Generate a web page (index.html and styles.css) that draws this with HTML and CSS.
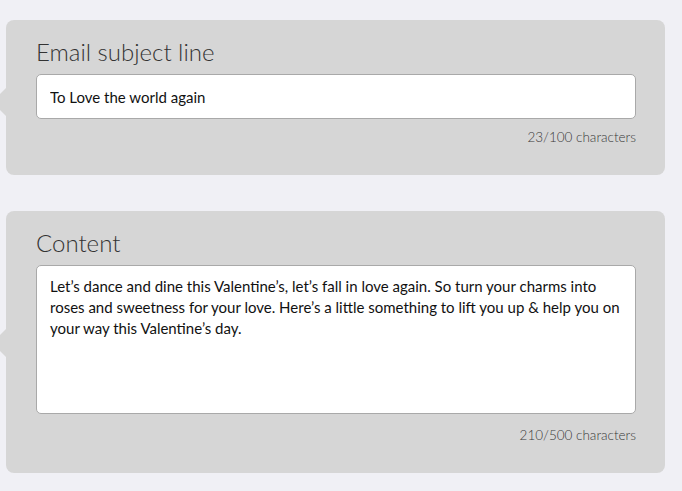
FILE: index.html
```html
<!DOCTYPE html>
<html>
<head>
<meta charset="utf-8">
<link rel="stylesheet" href="styles.css">
</head>
<body>
<div class="page">
  <section class="panel panel-subject">
    <h2 class="panel-title">Email subject line</h2>
    <input class="field" type="text" value="To Love the world again">
    <div class="count count-subject">23/100 characters</div>
  </section>
  <section class="panel panel-content">
    <h2 class="panel-title">Content</h2>
    <textarea class="field area">Let’s dance and dine this Valentine’s, let’s fall in love again. So turn your charms into roses and sweetness for your love. Here’s a little something to lift you up &amp; help you on your way this Valentine’s day.</textarea>
    <div class="count count-content">210/500 characters</div>
  </section>
</div>
</body>
</html>
```

FILE: styles.css
```css
html, body {
  margin: 0;
  padding: 0;
  background: #f0f0f5;
  font-family: Lato, "Open Sans", sans-serif;
  overflow: hidden;
}

.page {
  display: flex;
  flex-direction: column;
  gap: 36px;
  padding: 20px 17px 0 6px;
}

.panel {
  position: relative;
  background: #d6d6d6;
  border-radius: 8px;
  padding: 18px 29px 30px 30px;
}

.panel::before {
  content: "";
  position: absolute;
  left: -14px;
  width: 0;
  height: 0;
  border-top: 14px solid transparent;
  border-bottom: 14px solid transparent;
  border-right: 14px solid #d6d6d6;
}

.panel-subject::before {
  top: 68px;
}

.panel-content::before {
  top: 118px;
}

.panel-title {
  margin: 0 0 8px 0;
  font-size: 24px;
  line-height: 28px;
  font-weight: 300;
  color: #333;
}

.field {
  display: block;
  box-sizing: border-box;
  width: 100%;
  margin: 0;
  height: 45px;
  padding: 0 13px;
  border: 1px solid #a9a9a9;
  border-radius: 5px;
  background: #fff;
  font-family: Lato, "Open Sans", sans-serif;
  font-size: 15px;
  color: #111;
  outline: none;
}

.area {
  height: 149px;
  padding: 10px 13px;
  line-height: 21px;
  resize: none;
  overflow: hidden;
}

.count {
  text-align: right;
  font-size: 13.5px;
  line-height: 16px;
  font-weight: 300;
  color: #3a3a3a;
}

.count-subject {
  margin-top: 10px;
}

.count-content {
  margin-top: 13px;
}
```
